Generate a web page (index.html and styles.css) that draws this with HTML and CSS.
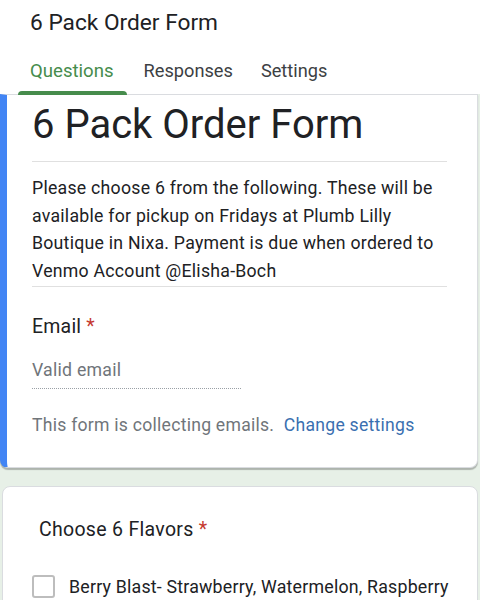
FILE: index.html
```html
<!DOCTYPE html>
<html>
<head>
<meta charset="utf-8">
<link rel="stylesheet" href="styles.css">
</head>
<body>
<header class="top">
  <div class="app-title">6 Pack Order Form</div>
  <nav class="tabs">
    <div class="tab active">Questions</div>
    <div class="tab">Responses</div>
    <div class="tab">Settings</div>
  </nav>
</header>
<main class="canvas">
  <section class="card card-head">
    <h1 class="form-title">6 Pack Order Form</h1>
    <p class="desc">Please choose 6 from the following. These will be available for pickup on Fridays at Plumb Lilly Boutique in Nixa. Payment is due when ordered to Venmo Account @Elisha-Boch</p>
    <div class="email-q">
      <div class="q-label">Email <span class="req">*</span></div>
      <div class="email-input">Valid email</div>
      <div class="note">This form is collecting emails. <span class="link">Change settings</span></div>
    </div>
  </section>
  <section class="card card-q">
    <div class="q-label q2">Choose 6 Flavors <span class="req">*</span></div>
    <label class="option"><span class="box"></span><span class="opt-text">Berry Blast- Strawberry, Watermelon, Raspberry</span></label>
  </section>
</main>
</body>
</html>
```
FILE: styles.css
```css
* { box-sizing: border-box; }
html, body { margin: 0; padding: 0; }
body {
  width: 480px;
  height: 600px;
  overflow: hidden;
  font-family: Roboto, "Noto Sans", sans-serif;
  color: #202124;
  background: #fff;
}
.top { background: #fff; }
.app-title {
  font-size: 22.7px;
  padding: 9px 0 0 30px;
  height: 48px;
  color: #202124;
}
.tabs {
  display: flex;
  padding-left: 18px;
  height: 46px;
  position: relative;
  z-index: 2;
}
.tab {
  font-size: 18.6px;
  color: #3c4043;
  padding: 12px 13px 0 12px;
  margin-right: 5px;
  position: relative;
}
.tab + .tab { font-size: 18.2px; margin-right: 3px; }
.tab.active { color: #468c4c; }
.tab.active::after {
  content: "";
  position: absolute;
  left: 0;
  right: 0;
  bottom: -1px;
  height: 4px;
  background: #468c4c;
  border-radius: 4px 4px 0 0;
}
.canvas {
  background: #e7f0e7;
  padding-bottom: 40px;
}
.card {
  background: #fff;
  border: 1px solid #dadce0;
}
.card-head {
  border-left: 7px solid #4285f4;
  border-radius: 0 0 8px 8px;
  margin-right: 2px;
  padding: 6px 30px 0 25px;
  height: 374px;
  box-shadow: 0 2px 1px rgba(0,0,0,0.25);
}
.form-title {
  margin: 0;
  font-weight: 400;
  font-size: 40px;
  line-height: 48px;
  padding-bottom: 12px;
  border-bottom: 1px solid #e0e0e0;
}
.desc {
  margin: 0;
  font-size: 17.7px;
  letter-spacing: 0.25px;
  line-height: 27.7px;
  padding: 13px 0 0;
  border-bottom: 1px solid #e0e0e0;
}
.email-q { padding-top: 28px; }
.q-label {
  font-size: 19.5px;
  letter-spacing: 0.2px;
  line-height: 24px;
}
.req { color: #c5392f; }
.email-input {
  margin-top: 21px;
  width: 209px;
  font-size: 17.7px;
  letter-spacing: 0.25px;
  color: #70757a;
  padding-bottom: 8px;
  border-bottom: 1px dotted #9aa0a6;
}
.note {
  margin-top: 26px;
  font-size: 17.6px;
  letter-spacing: 0.25px;
  color: #70757a;
}
.link { color: #3a6fb0; margin-left: 5px; }
.card-q {
  margin: 18px 2px 0 2px;
  border-radius: 8px;
  padding: 31px 20px 20px 29px;
  height: 200px;
}
.q2 { padding-left: 7px; font-size: 19.5px; letter-spacing: 0.3px; }
.option {
  display: flex;
  align-items: center;
  margin-top: 33px;
  font-size: 17.8px;
  letter-spacing: 0.2px;
  white-space: nowrap;
}
.box {
  width: 23px;
  height: 23px;
  border: 2px solid #bdbdbd;
  border-radius: 3px;
  margin-right: 14px;
  flex: none;
}
```
